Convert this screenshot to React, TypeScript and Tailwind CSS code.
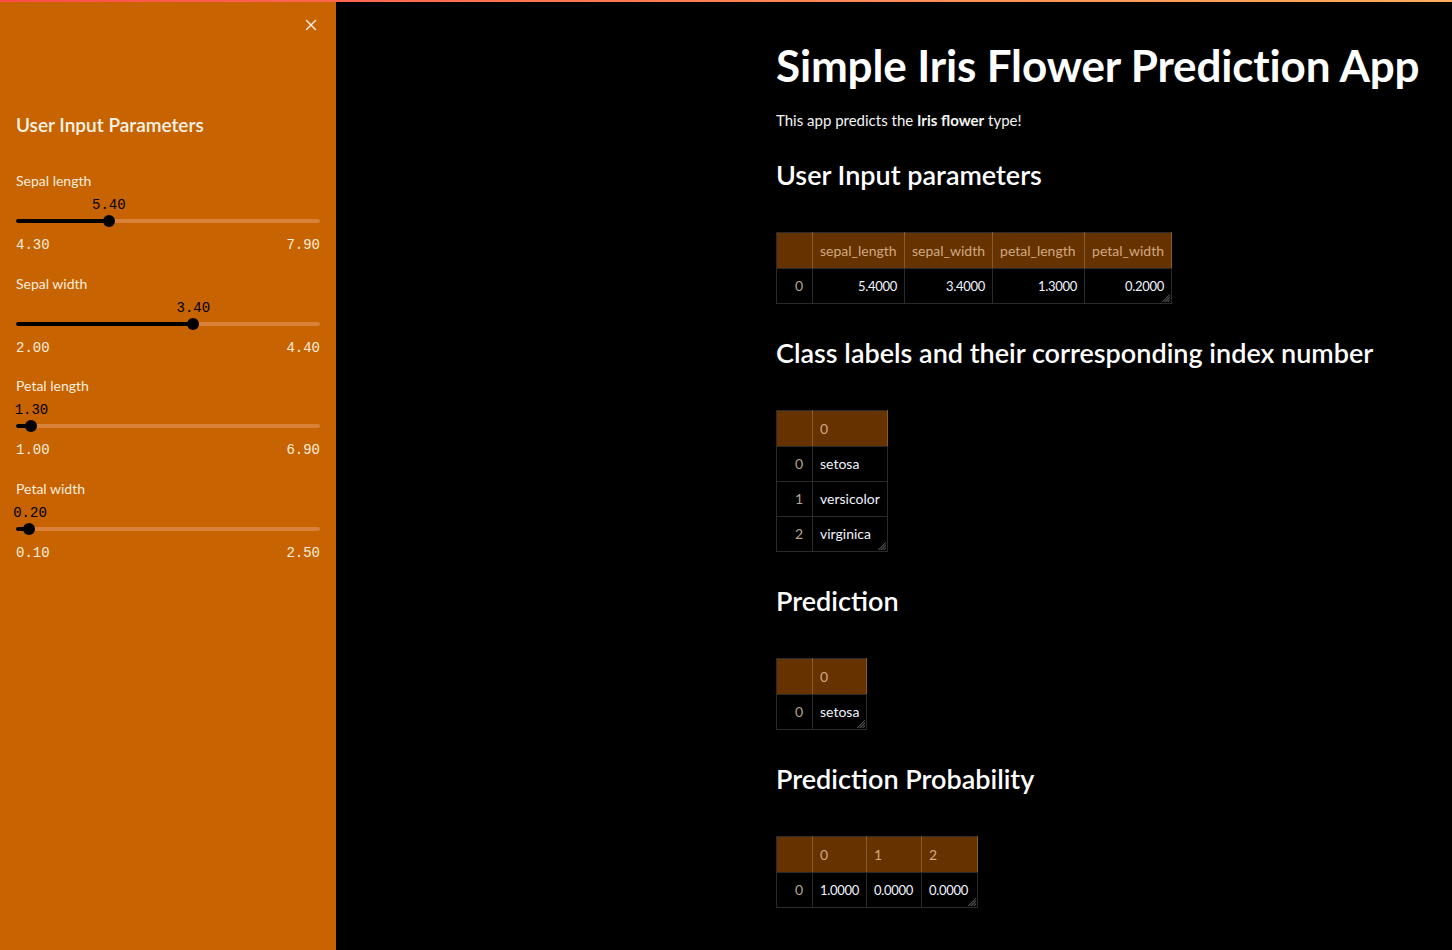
import { X } from 'lucide-react';

type SliderProps = { label: string; value: number; min: number; max: number };

const sliders: SliderProps[] = [
	{ label: 'Sepal length', value: 5.4, min: 4.3, max: 7.9 },
	{ label: 'Sepal width', value: 3.4, min: 2.0, max: 4.4 },
	{ label: 'Petal length', value: 1.3, min: 1.0, max: 6.9 },
	{ label: 'Petal width', value: 0.2, min: 0.1, max: 2.5 },
];

function Slider({ label, value, min, max }: SliderProps) {
	const pct = ((value - min) / (max - min)) * 100;
	return (
		<div className="h-[102.5px]">
			<div className="text-[14px] leading-[20px] text-[#fbeede]">{label}</div>
			<div className="relative mt-[5px] h-[32px]">
				<div
					className="absolute top-[-1px] -translate-x-1/2 font-['Liberation_Mono',monospace] text-[14px] leading-[20px] text-black"
					style={{ left: `max(${pct}%, 14px)` }}
				>
					{value.toFixed(2)}
				</div>
				<div className="absolute left-0 right-0 top-[23px] h-[4px] rounded-full bg-[#d9803a]" />
				<div className="absolute left-0 top-[23px] h-[4px] rounded-full bg-black" style={{ width: `${pct}%` }} />
				<div
					className="absolute top-[19px] h-[12px] w-[12px] -translate-x-1/2 rounded-full bg-black"
					style={{ left: `${pct}%` }}
				/>
			</div>
			<div className="mt-[7px] flex justify-between font-['Liberation_Mono',monospace] text-[14px] leading-[20px] text-[#fbeede]">
				<span>{min.toFixed(2)}</span>
				<span>{max.toFixed(2)}</span>
			</div>
		</div>
	);
}

type TableProps = { columns: string[]; widths: number[]; rows: { index: string; cells: string[] }[]; align?: 'left' | 'right' };

function DataTable({ columns, widths, rows, align = 'left' }: TableProps) {
	return (
		<div className="relative inline-block">
			<table className="table-fixed border-collapse border border-[#2b2b2b] text-[14px] leading-[20px]">
				<thead>
					<tr className="h-[36px] bg-[#663300]">
						<th className="w-[36px] border border-[#2b2b2b] border-r-[#8a5a2a]" />
						{columns.map((c, i) => (
							<th
								key={c}
								className="border border-[#2b2b2b] border-r-[#8a5a2a] px-[7px] text-left font-normal text-[#d2a880]"
								style={{ width: widths[i] }}
							>
								{c}
							</th>
						))}
					</tr>
				</thead>
				<tbody>
					{rows.map((r) => (
						<tr key={r.index} className="h-[35px]">
							<td className="border border-[#2b2b2b] pr-[9px] text-right text-[#b9a48e]">{r.index}</td>
							{r.cells.map((c, i) => (
								<td
									key={i}
									className={`whitespace-nowrap border border-[#2b2b2b] px-[7px] text-[#f0f4ff] ${
										/^[0-9.]+$/.test(c) ? 'text-[13px] tracking-[-0.3px]' : ''
									} ${align === 'right' ? 'text-right' : 'text-left'}`}
								>
									{c}
								</td>
							))}
						</tr>
					))}
				</tbody>
			</table>
			<svg className="absolute bottom-[1px] right-[1px]" width="10" height="10" viewBox="0 0 10 10">
				<path d="M9 1L1 9M9 4L4 9M9 7L7 9M9 2.5L2.5 9M9 5.5L5.5 9" stroke="#6b6b6b" strokeWidth="0.7" />
			</svg>
		</div>
	);
}

export default function App() {
	return (
		<div className="relative flex h-[950px] w-[1452px] overflow-hidden bg-black font-['Lato','Noto_Sans',sans-serif]">
			<div className="absolute left-0 right-0 top-0 z-10 h-[2px] bg-gradient-to-r from-[#ff4b4b] to-[#ffad5c]" />
			<aside className="relative w-[336px] shrink-0 bg-[#c76300] px-[16px]">
				<button type="button" className="absolute right-[16px] top-[16px] text-[#fbeede]">
					<X size={18} strokeWidth={2} />
				</button>
				<h2 className="pt-[112px] text-[19px] font-semibold leading-[26px] text-[#fdf3e8]">User Input Parameters</h2>
				<div className="mt-[33px]">
					{sliders.map((s) => (
						<Slider key={s.label} {...s} />
					))}
				</div>
			</aside>
			<main className="flex-1 pl-[440px] text-white">
				<h1 className="pt-[39px] text-[44px] font-bold leading-[52px] tracking-[-0.15px] whitespace-nowrap">
					Simple Iris Flower Prediction App
				</h1>
				<p className="mt-[17px] text-[15px] leading-[24px] text-[#f4f4f4]">
					This app predicts the <b className="font-bold">Iris flower</b> type!
				</p>
				<h2 className="mt-[25px] text-[27px] font-semibold leading-[36px]">User Input parameters</h2>
				<div className="mt-[39px]">
					<DataTable
						columns={['sepal_length', 'sepal_width', 'petal_length', 'petal_width']}
						widths={[92, 86, 92, 86]}
						rows={[{ index: '0', cells: ['5.4000', '3.4000', '1.3000', '0.2000'] }]}
						align="right"
					/>
				</div>
				<h2 className="mt-[25px] text-[27px] font-semibold leading-[36px]">
					Class labels and their corresponding index number
				</h2>
				<div className="mt-[39px]">
					<DataTable
						columns={['0']}
						widths={[74]}
						rows={[
							{ index: '0', cells: ['setosa'] },
							{ index: '1', cells: ['versicolor'] },
							{ index: '2', cells: ['virginica'] },
						]}
					/>
				</div>
				<h2 className="mt-[25px] text-[27px] font-semibold leading-[36px]">Prediction</h2>
				<div className="mt-[39px]">
					<DataTable columns={['0']} widths={[54]} rows={[{ index: '0', cells: ['setosa'] }]} />
				</div>
				<h2 className="mt-[25px] text-[27px] font-semibold leading-[36px]">Prediction Probability</h2>
				<div className="mt-[39px]">
					<DataTable
						columns={['0', '1', '2']}
						widths={[54, 55, 56]}
						rows={[{ index: '0', cells: ['1.0000', '0.0000', '0.0000'] }]}
					/>
				</div>
			</main>
		</div>
	);
}
